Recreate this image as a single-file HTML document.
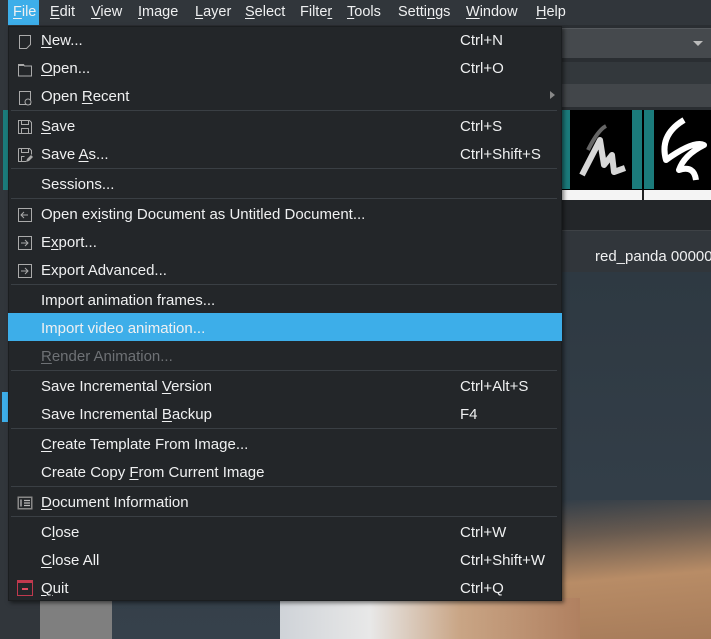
<!DOCTYPE html>
<html><head><meta charset="utf-8"><style>
*{margin:0;padding:0;box-sizing:border-box}
html,body{width:711px;height:639px;overflow:hidden}
body{position:relative;background:#2a2e32;font-family:"Liberation Sans",sans-serif;font-size:14px;color:#eff0f1}
.abs{position:absolute}
.mb{left:0;top:0;width:711px;height:25px;background:#31363b;font-size:14.5px}
.mb span{position:absolute;top:4px}
u{text-decoration:underline;text-underline-offset:2px}
.menu{left:8px;top:26px;width:554px;height:575px;background:#232629;border:1px solid #1b1e20;box-shadow:2px 2px 4px rgba(0,0,0,.5);font-size:15px}
.it{position:absolute;left:32px;white-space:nowrap;margin-top:1px}
.sc{position:absolute;left:451px;white-space:nowrap;margin-top:1px}
.sep{position:absolute;left:2px;width:546px;height:1px;background:#3a3f44}
.ic{position:absolute;left:8px;width:16px;height:16px}
</style></head><body>
<div class="abs" style="left:562px;top:28px;width:149px;height:30px;background:#45494d;border-top:1px solid #55595d"></div>
<div class="abs" style="left:693px;top:41px;width:0;height:0;border-left:5px solid transparent;border-right:5px solid transparent;border-top:5px solid #bbb"></div>
<div class="abs" style="left:562px;top:62px;width:149px;height:22px;background:#33383c"></div>
<div class="abs" style="left:562px;top:84px;width:149px;height:23px;background:#42464a"></div>
<div class="abs" style="left:562px;top:110px;width:149px;height:80px;background:#000"></div>
<div class="abs" style="left:562px;top:110px;width:8px;height:79px;background:#1b7b7b"></div>
<div class="abs" style="left:632px;top:110px;width:10px;height:79px;background:#1b7b7b"></div>
<div class="abs" style="left:644px;top:110px;width:10px;height:79px;background:#1b7b7b"></div>
<svg class="abs" style="left:570px;top:110px" width="62" height="79" viewBox="0 0 62 79"><path d="M12 65 L30 30 L34 55 L42 45 L44 62 L55 58" fill="none" stroke="#eee" stroke-width="6" stroke-linejoin="round" opacity=".9"/><path d="M18 40 Q28 20 36 16" fill="none" stroke="#666" stroke-width="4"/></svg>
<svg class="abs" style="left:654px;top:110px" width="57" height="79" viewBox="0 0 57 79"><path d="M30 10 Q5 25 12 50 Q40 30 50 35 Q30 45 25 60 Q40 55 42 70" fill="none" stroke="#fff" stroke-width="6" stroke-linejoin="round"/></svg>
<div class="abs" style="left:562px;top:190px;width:149px;height:10px;background:#f4f4f4"></div>
<div class="abs" style="left:642px;top:190px;width:2px;height:10px;background:#222"></div>
<div class="abs" style="left:562px;top:200px;width:149px;height:30px;background:#232629"></div>
<div class="abs" style="left:562px;top:230px;width:149px;height:42px;background:#31363b;border-top:1px solid #3e4246"></div>
<div class="abs" style="left:595px;top:248px;white-space:nowrap;font-size:15px">red_panda 000000</div>
<div class="abs" style="left:112px;top:272px;width:599px;height:367px;background:linear-gradient(180deg,#2e3942,#333e48 60%,#36414b)"></div>
<div class="abs" style="left:560px;top:500px;width:151px;height:139px;background:linear-gradient(175deg,rgba(156,118,87,0) 0%,rgba(156,118,87,.5) 25%,#b88c66 55%,#a77c5a)"></div>
<div class="abs" style="left:280px;top:598px;width:300px;height:41px;background:linear-gradient(90deg,#cfd3d8,#e8e8e8 30%,#c9a585 60%,#b08060)"></div>
<div class="abs" style="left:40px;top:600px;width:72px;height:39px;background:#7f7f7f"></div>
<div class="abs" style="left:0;top:25px;width:40px;height:614px;background:#31363b"></div>
<div class="abs" style="left:3px;top:110px;width:5px;height:80px;background:#1b7b7b"></div>
<div class="abs" style="left:2px;top:392px;width:6px;height:30px;background:#3daee9"></div>
<div class="abs mb">
<div class="abs" style="left:8px;top:0;width:31px;height:25px;background:#3daee9"></div>
<span style="left:13px"><u>F</u>ile</span>
<span style="left:50px"><u>E</u>dit</span>
<span style="left:91px"><u>V</u>iew</span>
<span style="left:138px"><u>I</u>mage</span>
<span style="left:195px"><u>L</u>ayer</span>
<span style="left:245px"><u>S</u>elect</span>
<span style="left:300px">Filte<u>r</u></span>
<span style="left:347px"><u>T</u>ools</span>
<span style="left:398px">Setti<u>n</u>gs</span>
<span style="left:466px"><u>W</u>indow</span>
<span style="left:536px"><u>H</u>elp</span>
</div>
<div class="abs menu">
<svg class="ic" style="top:7px" viewBox="0 0 16 16"><path d="M2.5 1.5h11v9l-4 4h-7z" fill="none" stroke="#aaa"/></svg>
<div class="it" style="top:4px"><u>N</u>ew...</div><div class="sc" style="top:4px">Ctrl+N</div>
<svg class="ic" style="top:35px" viewBox="0 0 16 16"><path d="M1.5 2.5h5l1 1.5h7v10h-13z" fill="none" stroke="#aaa"/><path d="M1.5 2.5h5l1 1.5h-6.5z" fill="#aaa"/></svg>
<div class="it" style="top:32px"><u>O</u>pen...</div><div class="sc" style="top:32px">Ctrl+O</div>
<svg class="ic" style="top:63px" viewBox="0 0 16 16"><path d="M2.5 1.5h11v13h-11z" fill="none" stroke="#aaa"/><circle cx="11" cy="12" r="3" fill="#232629" stroke="#aaa"/></svg>
<div class="it" style="top:60px">Open <u>R</u>ecent</div>
<div class="abs" style="left:541px;top:64px;border-top:4px solid transparent;border-bottom:4px solid transparent;border-left:5px solid #888"></div>
<div class="sep" style="top:83px"></div>
<svg class="ic" style="top:92px" viewBox="0 0 16 16"><path d="M1.5 1.5h11l2 2v11h-13z M4.5 1.5v4h7v-4 M4.5 14.5v-5h7v5" fill="none" stroke="#aaa"/></svg>
<div class="it" style="top:90px"><u>S</u>ave</div><div class="sc" style="top:90px">Ctrl+S</div>
<svg class="ic" style="top:120px" viewBox="0 0 16 16"><path d="M1.5 1.5h11l2 2v4 M9 14.5h-7.5v-13 M4.5 1.5v4h7v-4 M4.5 14.5v-5h3" fill="none" stroke="#aaa"/><path d="M9 15l1-3 4-4 2 2-4 4z" fill="#aaa"/></svg>
<div class="it" style="top:118px">Save <u>A</u>s...</div><div class="sc" style="top:118px">Ctrl+Shift+S</div>
<div class="sep" style="top:141px"></div>
<div class="it" style="top:148px">Sessions...</div>
<div class="sep" style="top:171px"></div>
<svg class="ic" style="top:180px" viewBox="0 0 16 16"><path d="M1.5 1.5h13v13h-13z M11 8h-7 M7 5l-3 3 3 3" fill="none" stroke="#aaa"/></svg>
<div class="it" style="top:178px">Open ex<u>i</u>sting Document as Untitled Document...</div>
<svg class="ic" style="top:208px" viewBox="0 0 16 16"><path d="M1.5 1.5h13v13h-13z M4 8h7 M8 5l3 3-3 3" fill="none" stroke="#aaa"/></svg>
<div class="it" style="top:206px">E<u>x</u>port...</div>
<svg class="ic" style="top:236px" viewBox="0 0 16 16"><path d="M1.5 1.5h13v13h-13z M4 8h7 M8 5l3 3-3 3" fill="none" stroke="#aaa"/></svg>
<div class="it" style="top:234px">Export Advanced...</div>
<div class="sep" style="top:257px"></div>
<div class="it" style="top:264px">Import animation frames...</div>
<div class="abs" style="left:-1px;top:286px;width:554px;height:28px;background:#3daee9"></div>
<div class="it" style="top:292px">Import video animation...</div>
<div class="it" style="top:320px;color:#6e7175"><u>R</u>ender Animation...</div>
<div class="sep" style="top:343px"></div>
<div class="it" style="top:350px">Save Incremental <u>V</u>ersion</div><div class="sc" style="top:350px">Ctrl+Alt+S</div>
<div class="it" style="top:378px">Save Incremental <u>B</u>ackup</div><div class="sc" style="top:378px">F4</div>
<div class="sep" style="top:401px"></div>
<div class="it" style="top:408px"><u>C</u>reate Template From Image...</div>
<div class="it" style="top:436px">Create Copy <u>F</u>rom Current Image</div>
<div class="sep" style="top:459px"></div>
<svg class="ic" style="top:468px" viewBox="0 0 16 16"><rect x="0.5" y="1.5" width="15" height="13" fill="#888"/><rect x="2" y="3" width="12" height="10" fill="#232629"/><path d="M4 4.5v7 M7 5.5h6 M7 8h6 M7 10.5h6" stroke="#bbb" stroke-width="1.3"/></svg>
<div class="it" style="top:466px"><u>D</u>ocument Information</div>
<div class="sep" style="top:489px"></div>
<div class="it" style="top:496px">C<u>l</u>ose</div><div class="sc" style="top:496px">Ctrl+W</div>
<div class="it" style="top:524px"><u>C</u>lose All</div><div class="sc" style="top:524px">Ctrl+Shift+W</div>
<svg class="ic" style="top:553px" viewBox="0 0 16 16"><rect x="0.5" y="0.5" width="15" height="15" fill="none" stroke="#c0394e"/><rect x="0.5" y="0.5" width="15" height="2.5" fill="#c0394e"/><path d="M5 9h6" stroke="#e04a60" stroke-width="2"/></svg>
<div class="it" style="top:552px"><u>Q</u>uit</div><div class="sc" style="top:552px">Ctrl+Q</div>
</div>
</body></html>
